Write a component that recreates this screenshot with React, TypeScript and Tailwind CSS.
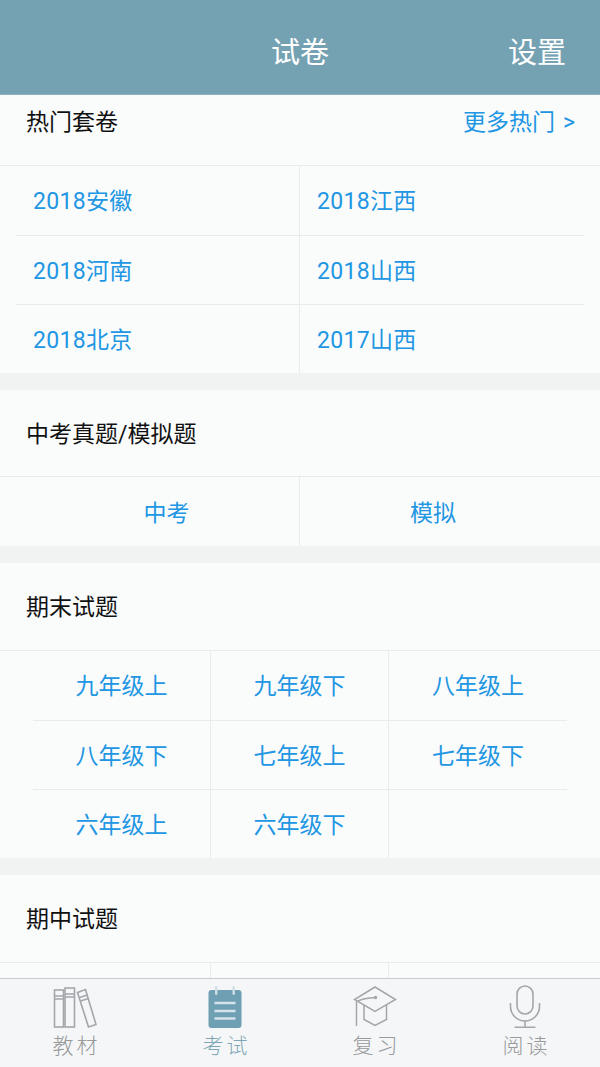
const font = '[font-family:Roboto,"Noto_Sans_CJK_SC",sans-serif]'

function GridSection({ items, cols, inset }: { items: string[]; cols: 2 | 3; inset: string }) {
  const rows: string[][] = []
  for (let i = 0; i < items.length; i += cols) rows.push(items.slice(i, i + cols))
  return (
    <div className="border-t border-[#e9ecec]">
      {rows.map((row, r) => (
        <div key={r} className={`flex h-[69px] ${inset}`}>
          {Array.from({ length: cols }).map((_, c) => (
            <div
              key={c}
              className={`flex items-center pt-[4px] text-[23px] text-[#2196e3] ${
                r > 0 ? 'border-t border-[#e9ecec]' : ''
              } ${c < cols - 1 ? 'border-r border-[#e9ecec]' : ''} ${
                cols === 3 ? 'w-[178px] justify-center' : 'w-[284px] pl-[17px] tracking-[0.3px]'
              }`}
            >
              {row[c]}
            </div>
          ))}
        </div>
      ))}
    </div>
  )
}

function Books() {
  return (
    <svg width="44" height="44" viewBox="0 0 44 44" fill="none" stroke="#a3a7ab" strokeWidth="1.6">
      <rect x="1.5" y="5" width="9" height="37" />
      <path d="M1.5 11h9M1.5 14h9" />
      <rect x="12" y="3" width="9.5" height="39" />
      <path d="M12 9h9.5M12 12h9.5" />
      <path d="M24.5 7.5l8-3 10.5 35-7.5 2.5z" />
      <path d="M26.5 12.5l8-2.5M27.5 16l8-2.5" />
    </svg>
  )
}

function Notepad() {
  return (
    <svg width="34" height="44" viewBox="0 0 34 44">
      <rect x="0.5" y="5" width="33" height="38" rx="3" fill="#6f9fb2" />
      <rect x="7" y="1" width="2.4" height="9" rx="1.2" fill="#cfe0e6" />
      <rect x="24.5" y="1" width="2.4" height="9" rx="1.2" fill="#cfe0e6" />
      <path d="M6.5 18h21M6.5 26h21M6.5 33.5h21" stroke="#d5e4ea" strokeWidth="2.6" />
    </svg>
  )
}

function GradCap() {
  return (
    <svg width="44" height="44" viewBox="0 0 44 44" fill="none" stroke="#a3a7ab" strokeWidth="1.5">
      <path d="M22 2L42.5 14.5 22 26.5 1.5 14.5z" />
      <path d="M3.5 41V17c3-2.500 11-4 20-4.500" />
      <circle cx="22.500" cy="12.500" r="1" fill="#a3a7ab" />
      <path d="M11 20v14.500l11 6 11.500-6V20" />
    </svg>
  )
}

function Mic() {
  return (
    <svg width="32" height="44" viewBox="0 0 32 44" fill="none" stroke="#a3a7ab" strokeWidth="1.6">
      <rect x="8" y="1" width="16" height="28" rx="8" />
      <path d="M1.500 18v3.500a14.500 14.500 0 0 0 29 0V18" />
      <path d="M16 36v6M5.500 42.200h21" />
    </svg>
  )
}

function Tab({ icon, label, active }: { icon: React.ReactNode; label: string; active?: boolean }) {
  return (
    <div className="flex w-[150px] flex-col items-center pt-[6px]">
      <div className="flex h-[44px] items-center justify-center">{icon}</div>
      <span className={`mt-[3px] text-[21px] leading-[28px] tracking-[3px] pl-[3px] font-light ${active ? 'text-[#7fa6b6]' : 'text-[#97999b]'}`}>
        {label}
      </span>
    </div>
  )
}

export default function App() {
  return (
    <div className={`flex h-[1067px] w-[600px] flex-col overflow-hidden bg-[#fafbfb] ${font}`}>
      <header className="relative flex h-[95px] shrink-0 items-center justify-center border-b border-[#8fb0bd] bg-[#75a2b3] pt-[14px] text-[29px] text-white">
        试卷
        <span className="absolute right-[34px]">设置</span>
      </header>

      <main className="flex-1 overflow-hidden">
        <section>
          <div className="flex h-[70px] items-start justify-between pl-[26px] pr-[25px] pt-[11px]">
            <span className="text-[23px] leading-[34px] text-[#111]">热门套卷</span>
            <span className="text-[23px] leading-[34px] text-[#2196e3]">
              更多热门<span className="ml-[8px]">&gt;</span>
            </span>
          </div>
          <GridSection inset="pl-[16px]" cols={2} items={['2018安徽', '2018江西', '2018河南', '2018山西', '2018北京', '2017山西']} />
        </section>
        <div className="h-[17px] bg-[#f1f3f3]" />
        <section>
          <div className="flex h-[86px] items-center pl-[26px] pt-[4px] text-[23px] text-[#111]">中考真题/模拟题</div>
          <div className="flex h-[70px] border-t border-[#e9ecec] pt-0 text-[23px] text-[#2196e3]">
            <div className="flex w-[300px] items-center justify-center border-r border-[#e9ecec] pl-[34px] pt-[5px]">中考</div>
            <div className="flex w-[266px] items-center justify-center pt-[5px]">模拟</div>
          </div>
        </section>
        <div className="h-[17px] bg-[#f1f3f3]" />
        <section>
          <div className="flex h-[87px] items-center pl-[26px] pt-[4px] text-[23px] text-[#111]">期末试题</div>
          <GridSection
            inset="pl-[33px]"
            cols={3}
            items={['九年级上', '九年级下', '八年级上', '八年级下', '七年级上', '七年级下', '六年级上', '六年级下']}
          />
        </section>
        <div className="h-[17px] bg-[#f1f3f3]" />
        <section>
          <div className="flex h-[87px] items-center pl-[26px] pt-[4px] text-[23px] text-[#111]">期中试题</div>
          <div className="flex h-[20px] border-t border-[#e9ecec] pl-[33px]">
            <div className="w-[178px] border-r border-[#e9ecec]" />
            <div className="w-[178px] border-r border-[#e9ecec]" />
          </div>
        </section>
      </main>

      <nav className="flex h-[89px] shrink-0 justify-center border-t border-[#c3ced2] bg-[#f5f6f7]">
        <Tab icon={<Books />} label="教材" />
        <Tab icon={<Notepad />} label="考试" active />
        <Tab icon={<GradCap />} label="复习" />
        <Tab icon={<Mic />} label="阅读" />
      </nav>
    </div>
  )
}
